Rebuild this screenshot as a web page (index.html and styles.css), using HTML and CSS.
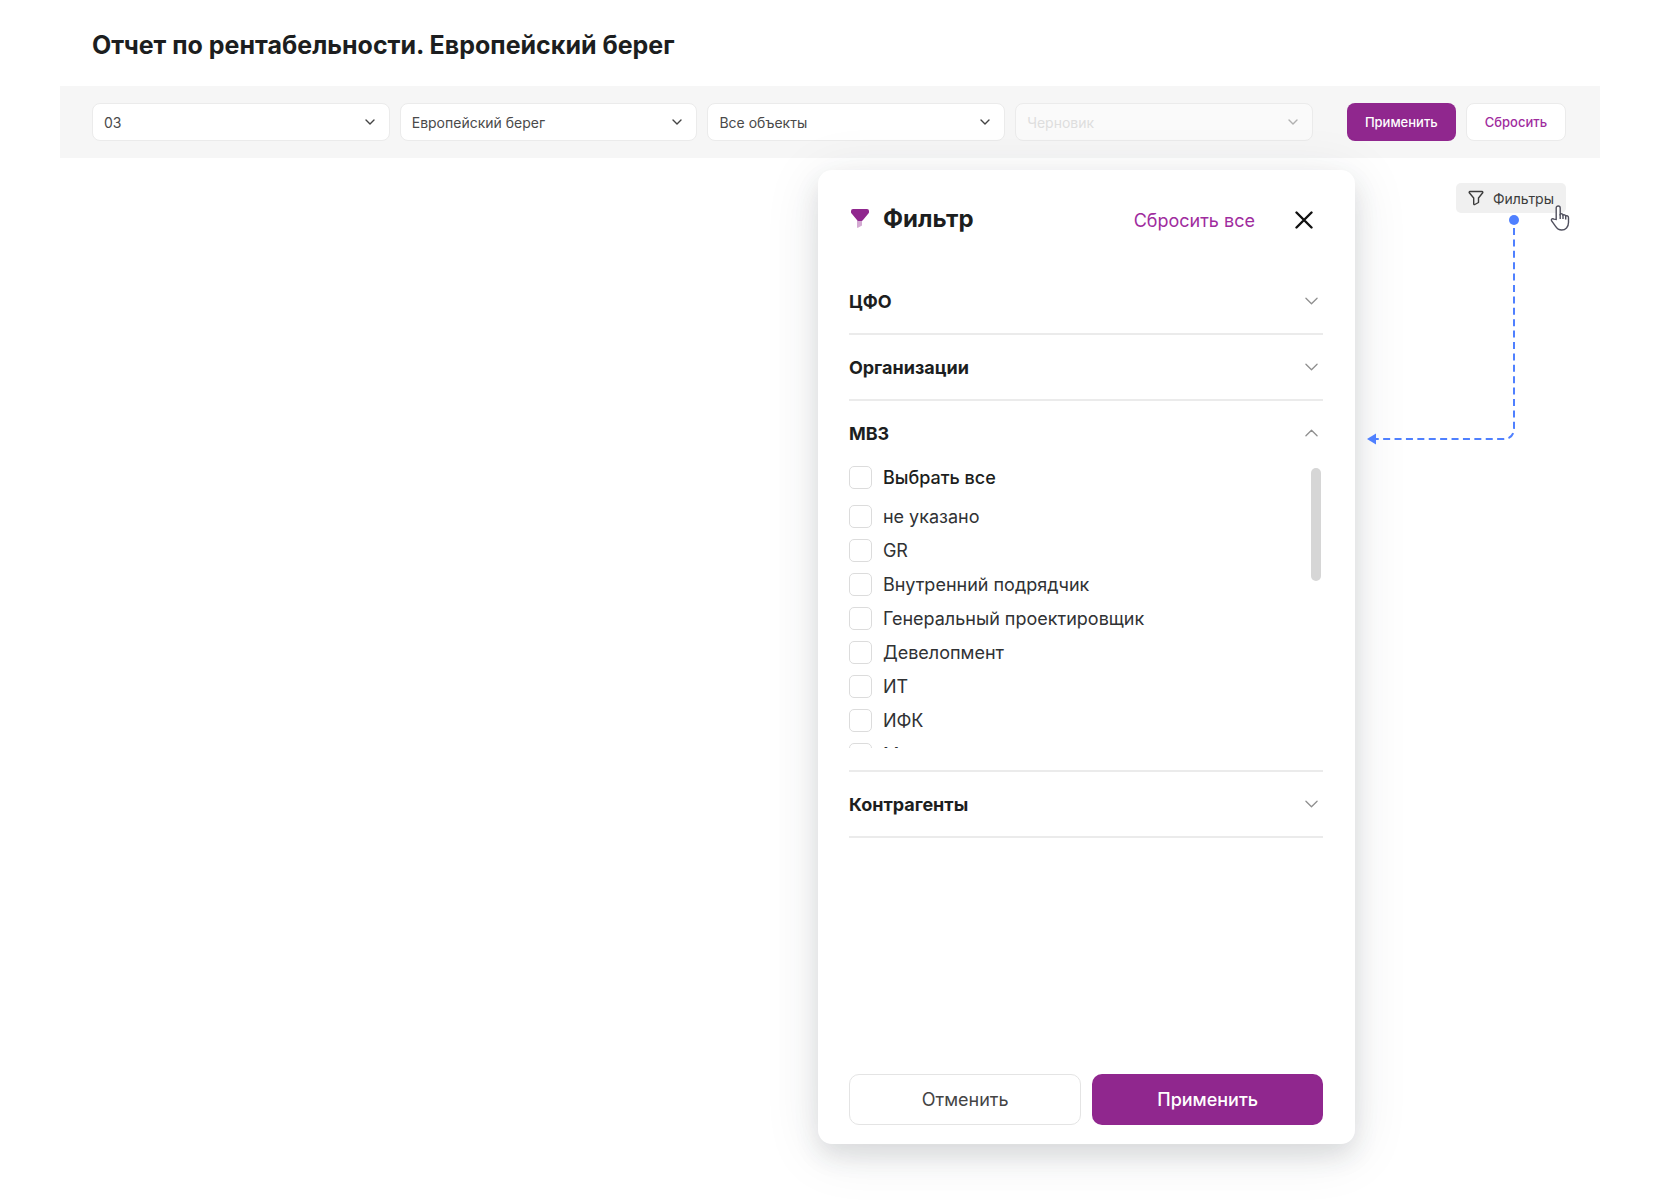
FILE: index.html
```html
<!DOCTYPE html>
<html lang="ru">
<head>
    <meta charset="UTF-8">
    <meta name="viewport" content="width=device-width, initial-scale=1.0">
    <title>Отчет по рентабельности</title>
    <link rel="stylesheet" href="styles.css">
</head>
<body>
    <h1 class="page-title">Отчет по рентабельности. Европейский берег</h1>

    <form class="toolbar">
        <div class="select">
            <select aria-label="Месяц">
                <option>03</option>
            </select>
            <svg class="chevron" viewBox="0 0 10 6"><path d="M1 1l4 4 4-4"/></svg>
        </div>
        <div class="select">
            <select aria-label="Проект">
                <option>Европейский берег</option>
            </select>
            <svg class="chevron" viewBox="0 0 10 6"><path d="M1 1l4 4 4-4"/></svg>
        </div>
        <div class="select">
            <select aria-label="Объекты">
                <option>Все объекты</option>
            </select>
            <svg class="chevron" viewBox="0 0 10 6"><path d="M1 1l4 4 4-4"/></svg>
        </div>
        <div class="select disabled">
            <select aria-label="Статус" disabled>
                <option>Черновик</option>
            </select>
            <svg class="chevron" viewBox="0 0 10 6"><path d="M1 1l4 4 4-4"/></svg>
        </div>
        <div class="toolbar-actions">
            <button type="button" class="btn btn-primary">Применить</button>
            <button type="button" class="btn btn-link">Сбросить</button>
        </div>
    </form>

    <main class="content">
        <section class="panel">
            <header class="panel-header">
                <div class="panel-name">
                    <svg class="funnel" viewBox="0 0 18 19">
                        <path class="funnel-leg" d="M6 11h5v5.500l-4 2.300h-1z"/>
                        <path class="funnel-top" d="M2 0h14a2 2 0 0 1 2 2v1.200a2 2 0 0 1-.6 1.400L11.800 11.300a2 2 0 0 1-1.400.7H7.600a2 2 0 0 1-1.400-.7L.6 4.600A2 2 0 0 1 0 3.200V2a2 2 0 0 1 2-2z"/>
                    </svg>
                    <h2>Фильтр</h2>
                </div>
                <button type="button" class="reset-all">Сбросить все</button>
                <button type="button" class="close" aria-label="Закрыть">
                    <svg viewBox="0 0 18 18"><path d="M1.500 1.500l15 15M16.500 1.500l-15 15"/></svg>
                </button>
            </header>

            <div class="group">
                <button type="button" class="group-title">ЦФО
                    <svg class="arrow" viewBox="0 0 14 8"><path d="M1 1l6 6 6-6"/></svg>
                </button>
            </div>
            <div class="group">
                <button type="button" class="group-title">Организации
                    <svg class="arrow" viewBox="0 0 14 8"><path d="M1 1l6 6 6-6"/></svg>
                </button>
            </div>
            <div class="group open">
                <button type="button" class="group-title">МВЗ
                    <svg class="arrow" viewBox="0 0 14 8"><path d="M1 7l6-6 6 6"/></svg>
                </button>
                <div class="options">
                    <div class="options-list">
                        <label class="option option-all"><input type="checkbox">Выбрать все</label>
                        <label class="option"><input type="checkbox">не указано</label>
                        <label class="option"><input type="checkbox">GR</label>
                        <label class="option"><input type="checkbox">Внутренний подрядчик</label>
                        <label class="option"><input type="checkbox">Генеральный проектировщик</label>
                        <label class="option"><input type="checkbox">Девелопмент</label>
                        <label class="option"><input type="checkbox">ИТ</label>
                        <label class="option"><input type="checkbox">ИФК</label>
                        <label class="option"><input type="checkbox">Маркетинг</label>
                    </div>
                    <div class="scroll-thumb"></div>
                </div>
            </div>
            <div class="group">
                <button type="button" class="group-title">Контрагенты
                    <svg class="arrow" viewBox="0 0 14 8"><path d="M1 1l6 6 6-6"/></svg>
                </button>
            </div>

            <footer class="panel-footer">
                <button type="button" class="btn-large btn-cancel">Отменить</button>
                <button type="button" class="btn-large btn-primary">Применить</button>
            </footer>
        </section>

        <div class="trigger">
            <button type="button" class="filters-btn">
                <svg viewBox="0 0 16 16"><path d="M2 1.500h12c.8 0 1 .8.700 1.300L10.500 8v4.500L6.800 14.500c-.5.200-1 0-1.100-.6V8L1.300 2.800C1 2.300 1.200 1.500 2 1.500z"/></svg>
                Фильтры
            </button>
            <!-- линия от кнопки к панели -->
            <svg class="connector" viewBox="0 0 154 234">
                <circle cx="148" cy="6" r="5"/>
                <path class="line" d="M148 14v200q0 11-11 11H10"/>
                <path class="tip" d="M1 225l9-5.500v11z"/>
            </svg>
            <svg class="cursor" viewBox="0 0 20 26">
                <path d="M6.200 14.500V3a2 2 0 0 1 4 0v6.200c1-.8 2.600-.4 2.800.8.900-.6 2.300-.2 2.600.9 1.200-.5 2.900.1 2.900 1.900v4.700c0 4.400-3 7.500-6.800 7.500-3.200 0-4.900-1.600-6.300-3.900L1.500 15.700c-.7-1.500 1.200-2.600 2.400-1.600z"/>
                <path d="M10.200 9v5M13 10v4M15.700 11v3.500"/>
            </svg>
        </div>
    </main>
</body>
</html>
```
FILE: styles.css
```css
* {
    box-sizing: border-box;
}

body {
    margin: 0;
    padding: 0 80px 60px 60px;
    font-family: Inter, "Liberation Sans", sans-serif;
    background-color: #fff;
    color: #1c1e20;
}

button, select, input {
    font-family: inherit;
    margin: 0;
}

button {
    cursor: pointer;
}

svg {
    display: block;
    flex: none;
    fill: none;
}

.page-title {
    margin: 0;
    padding: 29px 32px 25px;
    font-size: 25px;
    line-height: 32px;
    font-weight: 700;
}

/* Toolbar */

.toolbar {
    display: flex;
    gap: 10px;
    padding: 17px 34px 17px 32px;
    background-color: #f6f6f6;
}

.select {
    position: relative;
    flex: 1;
    min-width: 0;
}

.select select {
    width: 100%;
    height: 38px;
    padding: 0 32px 0 11px;
    appearance: none;
    border: 1px solid #ebebeb;
    border-radius: 8px;
    background-color: #fff;
    color: #4a4a4a;
    font-size: 14px;
    opacity: 1;
}

.chevron {
    position: absolute;
    right: 15px;
    top: 16px;
    width: 10px;
    height: 6px;
    stroke: #444;
    stroke-width: 1.4;
    stroke-linecap: round;
    stroke-linejoin: round;
    pointer-events: none;
}

.disabled select {
    background-color: #fafafa;
    color: #dedede;
}

.disabled .chevron {
    stroke: #b0b0b0;
}

.toolbar-actions {
    display: flex;
    gap: 10px;
    margin-left: 24px;
}

.btn {
    height: 38px;
    padding: 0 18px;
    border: none;
    border-radius: 8px;
    font-size: 13px;
}

.btn-primary {
    background-color: #90278e;
    color: #fff;
    font-weight: 500;
}

.btn-link {
    border: 1px solid #ebebeb;
    background-color: #fff;
    color: #a02c9e;
    font-weight: 500;
}

/* Filter panel */

.content {
    display: flex;
    justify-content: flex-end;
    align-items: flex-start;
    gap: 101px;
    padding: 12px 34px 0;
}

.panel {
    position: relative;
    display: flex;
    flex-direction: column;
    width: 537px;
    min-height: calc(100vh - 230px);
    padding: 32px 32px 19px 31px;
    border-radius: 14px;
    background-color: #fff;
    box-shadow: 0 12px 24px rgba(38, 50, 56, 0.12), 0 8px 56px rgba(38, 50, 56, 0.1);
}

.panel-header {
    display: flex;
    align-items: center;
    height: 36px;
    margin-bottom: 31px;
    padding-left: 2px;
}

.panel-name {
    display: flex;
    align-items: center;
    gap: 14px;
    margin-right: auto;
    padding-bottom: 3px;
}

.panel-header h2 {
    margin: 0;
    font-size: 24px;
    line-height: 30px;
    font-weight: 700;
}

.funnel {
    width: 18px;
    height: 19px;
}

.funnel-top {
    fill: #90278e;
}

.funnel-leg {
    fill: #d3a9d2;
}

.reset-all {
    padding: 0;
    border: none;
    background: none;
    color: #a02c9e;
    font-size: 18px;
}

.close {
    margin: 0 10px 0 40px;
    padding: 0;
    border: none;
    background: none;
}

.close svg {
    width: 18px;
    height: 18px;
    stroke: #111;
    stroke-width: 2.4;
    stroke-linecap: round;
}

.group {
    border-bottom: 2px solid #ebebeb;
}

.group-title {
    display: flex;
    justify-content: space-between;
    align-items: center;
    width: 100%;
    height: 64px;
    padding: 0 5px 0 0;
    border: none;
    background: none;
    color: #1c1e20;
    font-size: 18px;
    font-weight: 700;
}

.arrow {
    width: 13px;
    height: 8px;
    stroke: #8f8f8f;
    stroke-width: 1.4;
    stroke-linecap: round;
    stroke-linejoin: round;
}

.options {
    position: relative;
    padding: 1px 0 22px;
}

.options-list {
    height: 282px;
    overflow-y: auto;
    scrollbar-width: none;
}

.option {
    display: flex;
    align-items: center;
    gap: 11px;
    height: 23px;
    margin-bottom: 11px;
    color: #303234;
    font-size: 18px;
}

.option-all {
    margin-bottom: 16px;
    color: #1c1e20;
    font-weight: 500;
}

.option input {
    width: 23px;
    height: 23px;
    appearance: none;
    border: 1px solid #dcdcdc;
    border-radius: 5px;
    background-color: #fff;
}

.scroll-thumb {
    position: absolute;
    top: 3px;
    right: 2px;
    width: 10px;
    height: 113px;
    border-radius: 5px;
    background-color: #d6d6d6;
}

.panel-footer {
    display: flex;
    gap: 11px;
    margin-top: auto;
}

.btn-large {
    flex: 1;
    height: 51px;
    border: none;
    border-radius: 10px;
    font-size: 18px;
}

.btn-cancel {
    border: 1px solid #e4e4e4;
    background-color: #fff;
    color: #444;
}

/* Filters button */

.trigger {
    position: relative;
    margin-top: 13px;
}

.filters-btn {
    display: flex;
    align-items: center;
    gap: 9px;
    height: 30px;
    padding: 0 12px;
    border: none;
    border-radius: 5px;
    background-color: #f0f0f0;
    color: #3c3c3c;
    font-size: 14px;
}

.filters-btn svg {
    width: 16px;
    height: 16px;
    stroke: #3c3c3c;
    stroke-width: 1.4;
    stroke-linejoin: round;
}

.connector {
    position: absolute;
    top: 31px;
    right: 46px;
    width: 154px;
    height: 234px;
}

.connector circle,
.connector .tip {
    fill: #4f80ff;
}

.connector .line {
    stroke: #4f80ff;
    stroke-width: 2;
    stroke-dasharray: 7 4.4;
}

.cursor {
    position: absolute;
    top: 22px;
    right: -4px;
    width: 20px;
    height: 26px;
    fill: #fff;
    stroke: #50505e;
    stroke-width: 1.4;
}
```
